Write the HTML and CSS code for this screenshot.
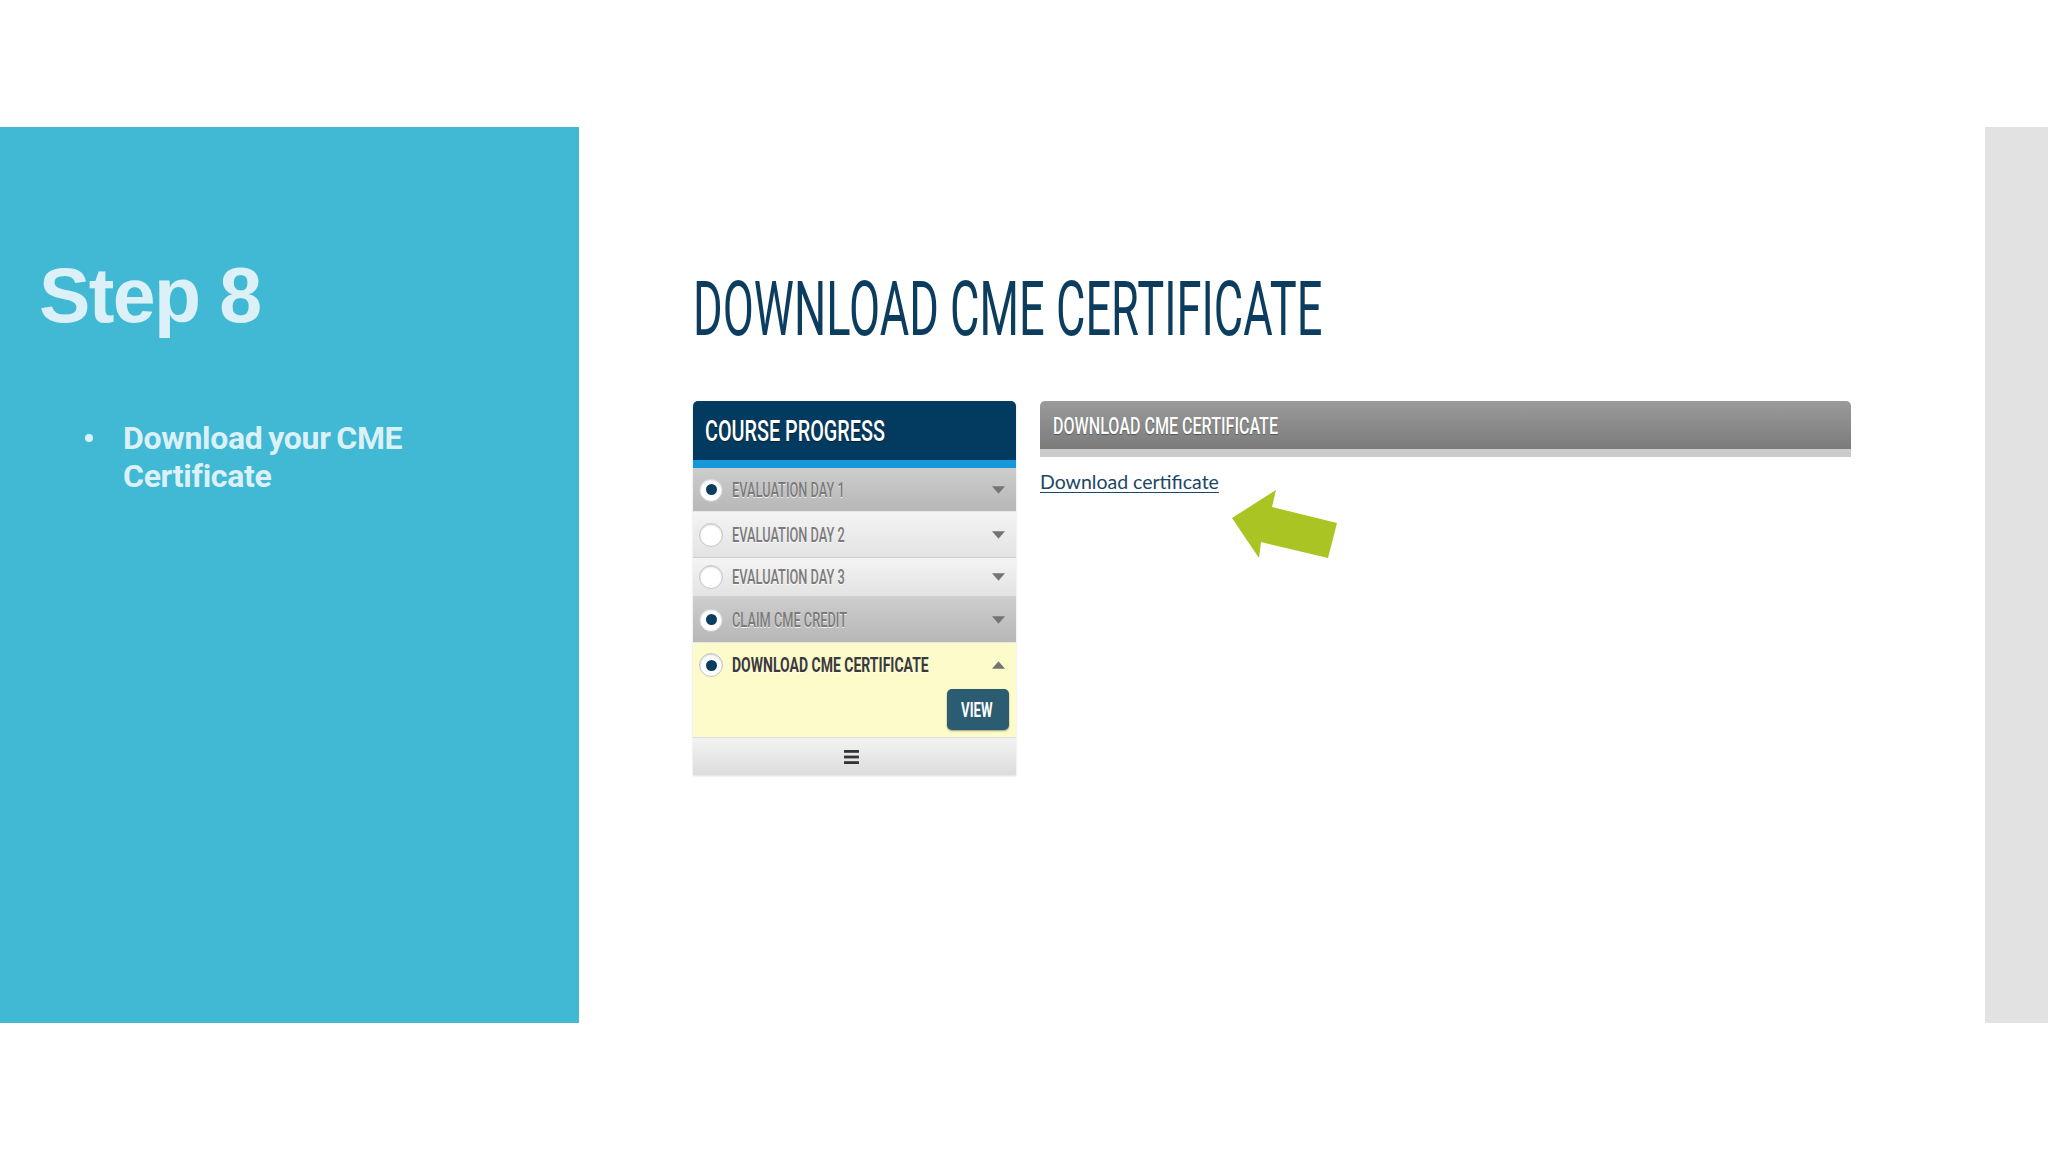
FILE: index.html
```html
<!DOCTYPE html>
<html lang="en">
<head>
<meta charset="utf-8">
<title>Step 8 - Download CME Certificate</title>
<link rel="stylesheet" href="styles.css">
</head>
<body>
<div class="slide">
  <div class="topband"></div>
  <div class="main">
    <aside class="side">
      <h1 class="step">Step 8</h1>
      <ul class="bullets">
        <li>Download your CME Certificate</li>
      </ul>
    </aside>
    <section class="content">
      <h2 class="title"><span class="cond title-text">DOWNLOAD CME CERTIFICATE</span></h2>
      <div class="panels">
        <div class="progress">
          <div class="progress-head"><span class="cond head-text">COURSE PROGRESS</span></div>
          <div class="stripe"></div>
          <div class="row row-done r1">
            <span class="radio on"></span>
            <span class="label"><span class="cond row-text">EVALUATION DAY 1</span></span>
            <svg class="caret" viewBox="0 0 14 8"><path d="M0 0H14L7 8Z"/></svg>
          </div>
          <div class="row row-open r2">
            <span class="radio"></span>
            <span class="label"><span class="cond row-text">EVALUATION DAY 2</span></span>
            <svg class="caret" viewBox="0 0 14 8"><path d="M0 0H14L7 8Z"/></svg>
          </div>
          <div class="row row-open r3">
            <span class="radio"></span>
            <span class="label"><span class="cond row-text">EVALUATION DAY 3</span></span>
            <svg class="caret" viewBox="0 0 14 8"><path d="M0 0H14L7 8Z"/></svg>
          </div>
          <div class="row row-done r4">
            <span class="radio on"></span>
            <span class="label"><span class="cond row-text">CLAIM CME CREDIT</span></span>
            <svg class="caret" viewBox="0 0 14 8"><path d="M0 0H14L7 8Z"/></svg>
          </div>
          <div class="active">
            <div class="row r5">
              <span class="radio on"></span>
              <span class="label"><span class="cond row-text strong">DOWNLOAD CME CERTIFICATE</span></span>
              <svg class="caret" viewBox="0 0 14 8"><path d="M0 8H14L7 0Z"/></svg>
            </div>
            <div class="btn-row"><button class="view"><span class="cond view-text">VIEW</span></button></div>
          </div>
          <div class="progress-foot">
            <svg class="menu" viewBox="0 0 16 15"><rect x="0" y="0" width="16" height="3"/><rect x="0" y="6" width="16" height="3"/><rect x="0" y="12" width="16" height="3"/></svg>
          </div>
        </div>
        <div class="detail">
          <div class="detail-head"><span class="cond dhead-text">DOWNLOAD CME CERTIFICATE</span></div>
          <div class="detail-strip"></div>
          <a class="dl-link" href="#">Download certificate</a>
          <svg class="pointer" viewBox="0 0 106 69"><polygon points="44,0 0,28 27,68 29,52 96,68 105,33 40,17"/></svg>
        </div>
      </div>
    </section>
    <div class="strip"></div>
  </div>
</div>
</body>
</html>
```
FILE: styles.css
```css
* { box-sizing: border-box; }
html, body { margin: 0; padding: 0; background: #ffffff; }
body { width: 2048px; height: 1152px; overflow: hidden; font-family: "Roboto", "Liberation Sans", sans-serif; }

.slide { width: 2048px; height: 1152px; display: flex; flex-direction: column; }
.topband { height: 127px; flex: none; }
.main { height: 896px; display: flex; flex: none; }

/* Left blue column */
.side { width: 579px; flex: none; background: #41b9d4; color: #dbf1f7; padding: 129px 0 0 39px; }
.step { margin: 0; font-family: "Liberation Sans", Arial, sans-serif; font-weight: 700; font-size: 77px; line-height: 78px; letter-spacing: -1.6px; }
.bullets { margin: 85px 0 0 0; padding: 0 0 0 84px; list-style: none; width: 480px; }
.bullets li { position: relative; font-family: "Roboto", sans-serif; font-weight: 700; font-size: 32px; line-height: 38px; letter-spacing: -0.3px; word-spacing: -2px; }
.bullets li::before { content: ""; position: absolute; left: -38px; top: 15px; width: 8px; height: 8px; border-radius: 50%; background: #dbf1f7; }

/* Middle content */
.content { flex: 1; padding: 144px 0 0 114px; }
.title { margin: 0; height: 76px; font-weight: 400; font-size: 76px; line-height: 76px; color: #0c3d5f; white-space: nowrap; }
.cond { display: inline-block; transform-origin: 0 50%; white-space: nowrap; }
.title-text { transform: scaleX(0.595); }

.panels { margin-top: 54px; display: flex; gap: 24px; align-items: flex-start; }

.progress { width: 323px; flex: none; box-shadow: 0 1px 2px rgba(0,0,0,0.15); }
.progress-head { height: 59px; background: #033b60; border-radius: 5px 5px 0 0; padding-left: 12px; font-size: 30px; line-height: 59px; font-weight: 500; color: #ffffff; text-shadow: 0 1px 1px rgba(0,0,0,0.5); }
.head-text { transform: scaleX(0.66); }
.stripe { height: 8px; background: #1597da; }

.row { display: flex; align-items: center; padding: 0 11px 0 6px; border-bottom: 1px solid #d6d6d6; }
.r1 { height: 44px; }
.r2 { height: 46px; }
.r3 { height: 39px; }
.r4 { height: 46px; }
.row-done { background: linear-gradient(#cdcdcd, #b7b7b7); border-bottom-color: #e8e8e8; }
.row-open { background: linear-gradient(#f4f4f4, #e3e3e3); border-bottom-color: #cfcfcf; }
.radio { width: 24px; height: 24px; flex: none; border-radius: 50%; background: #ffffff; border: 1px solid #c4c4c4; box-shadow: inset 0 1px 2px rgba(0,0,0,0.2); display: flex; align-items: center; justify-content: center; margin-right: 9px; }
.radio.on::after { content: ""; width: 11px; height: 11px; border-radius: 50%; background: #0b3d5f; }
.label { flex: 1 1 0; min-width: 0; white-space: nowrap; }
.row-text { font-size: 20px; font-weight: 500; color: #7a7a7a; text-shadow: 0 1px 0 rgba(255,255,255,0.8); transform: scaleX(0.64); }
.row-text.strong { font-weight: 700; color: #3a3a3a; transform: scaleX(0.7); }
.caret { width: 13px; height: 8px; fill: #747474; flex: none; }

.active { background: #fefbca; height: 95px; border-bottom: 1px solid #dedede; }
.r5 { height: 44px; border-bottom: none; }
.btn-row { display: flex; justify-content: flex-end; padding: 2px 7px 0 0; }
.view { width: 62px; height: 41px; border: none; border-radius: 5px; background: #2c5c71; box-shadow: 0 1px 2px rgba(0,0,0,0.4); padding: 0 0 0 14px; text-align: left; font-family: "Roboto", sans-serif; font-weight: 700; font-size: 21px; color: #ffffff; }
.view-text { transform: scaleX(0.63); }

.progress-foot { height: 37px; background: linear-gradient(#f3f3f3, #dcdcdc); display: flex; align-items: center; justify-content: center; padding-right: 6px; }
.menu { width: 15px; height: 14px; fill: #333333; }

.detail { width: 811px; flex: none; position: relative; }
.detail-head { height: 48px; border-radius: 5px 5px 0 0; background: linear-gradient(#9b9b9b, #7b7b7b); padding: 2px 0 0 13px; font-size: 24px; line-height: 46px; font-weight: 500; color: #ffffff; text-shadow: 0 1px 1px rgba(0,0,0,0.35); }
.dhead-text { transform: scaleX(0.67); }
.detail-strip { height: 8px; background: #cbcbcb; }
.dl-link { display: inline-block; margin-top: 14px; font-family: "Lato", sans-serif; font-size: 19.5px; line-height: 22px; color: #1b4666; text-decoration: underline; text-underline-offset: 3px; }
.pointer { position: absolute; left: 192px; top: 89px; width: 106px; height: 69px; fill: #a9c423; }

.strip { width: 63px; flex: none; background: #e2e2e2; }
```
